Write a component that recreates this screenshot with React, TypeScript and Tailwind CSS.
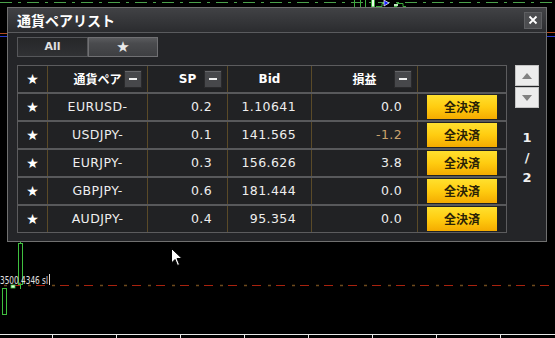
import React from "react";

const rows = [
  { pair: "EURUSD-", sp: "0.2", bid: "1.10641", pl: "0.0", neg: false },
  { pair: "USDJPY-", sp: "0.1", bid: "141.565", pl: "-1.2", neg: true },
  { pair: "EURJPY-", sp: "0.3", bid: "156.626", pl: "3.8", neg: false },
  { pair: "GBPJPY-", sp: "0.6", bid: "181.444", pl: "0.0", neg: false },
  { pair: "AUDJPY-", sp: "0.4", bid: "95.354", pl: "0.0", neg: false },
];

const latin = { fontFamily: '"DejaVu Sans", "Noto Sans CJK JP", sans-serif' };
const jp = { fontFamily: '"Noto Sans CJK JP", "DejaVu Sans", sans-serif' };

function Minus() {
  return (
    <span className="absolute right-[5px] top-1/2 -translate-y-1/2 w-[18px] h-[18px] bg-[#47484b] border border-[#2a2a2c] shadow-[inset_0_1px_0_#66676a] flex items-center justify-center">
      <span className="w-[8px] h-[2px] bg-[#f0f0f0]" />
    </span>
  );
}

function ChartBg() {
  const ticks = [52, 116, 180, 244, 308, 372, 436, 500];
  return (
    <svg className="absolute inset-0" width="555" height="338" viewBox="0 0 555 338">
      <line x1="0" y1="2.5" x2="555" y2="2.5" stroke="#4aa04a" strokeWidth="1" strokeDasharray="12 6 3 6" />
      <line x1="354.5" y1="0" x2="354.5" y2="7" stroke="#3caa3c" />
      <line x1="360.5" y1="0" x2="360.5" y2="7" stroke="#3caa3c" />
      <line x1="365.5" y1="0" x2="365.5" y2="7" stroke="#3caa3c" />
      <rect x="371.5" y="-1" width="3" height="8" fill="#e6ffe6" stroke="#3caa3c" />
      <polyline points="376,6.5 382,6.5 382,3.5 388,3.5" fill="none" stroke="#3caa3c" />
      <polyline points="394,6.5 397,6.5 397,3.5 403,3.5 403,6.5 406,6.5" fill="none" stroke="#3caa3c" />
      <rect x="394" y="4" width="4" height="2" fill="#bfe8bf" />
      <path d="M384 0 L389 3 L384 6 Z" fill="#1a22ff" stroke="#ffffff" strokeWidth="0.7" />
      <line x1="0" y1="33.5" x2="7" y2="33.5" stroke="#b04a20" />
      <line x1="0" y1="36.5" x2="7" y2="36.5" stroke="#2a3ad0" />
      <line x1="547" y1="32.5" x2="555" y2="32.5" stroke="#b04a20" />
      <line x1="547" y1="36.5" x2="555" y2="36.5" stroke="#2a3ad0" />
      <line x1="0" y1="285.5" x2="555" y2="285.5" stroke="#a8220e" strokeWidth="1.2" strokeDasharray="9 15" strokeDashoffset="12" />
      <line x1="0" y1="285.5" x2="555" y2="285.5" stroke="#6e4a1c" strokeWidth="1.6" strokeDasharray="3 21" strokeDashoffset="20" />
      <line x1="20.5" y1="242" x2="20.5" y2="289" stroke="#3fbf3f" />
      <rect x="18.5" y="243.5" width="4" height="41" fill="#000" stroke="#3fbf3f" />
      <rect x="2.5" y="288.5" width="4" height="26" fill="#000" stroke="#3fbf3f" />
      <rect x="11" y="285" width="4" height="3" fill="#d8ffd8" stroke="#3fbf3f" strokeWidth="0.8" />
      <text x="0" y="284" fontSize="10" fill="#e0e0e0" fontFamily="DejaVu Sans" textLength="48" lengthAdjust="spacingAndGlyphs">3500.4346 sl</text>
      <line x1="49.5" y1="274" x2="49.5" y2="285" stroke="#dddddd" />
      <line x1="0" y1="334.5" x2="555" y2="334.5" stroke="#e8e8e8" />
      {ticks.map((t) => (
        <line key={t} x1={t + 0.5} y1="334" x2={t + 0.5} y2="338" stroke="#e8e8e8" />
      ))}
    </svg>
  );
}

export default function App() {
  return (
    <div className="relative w-[555px] h-[338px] bg-black overflow-hidden" style={latin}>
      <ChartBg />
      <div className="absolute left-[7px] top-[7px] w-[540px] h-[235px] border border-[#707070] bg-[#242528] flex flex-col">
        <div className="h-[24px] flex items-center justify-between pl-[9px] pr-[4px] bg-[linear-gradient(#414245,#37383b_45%,#2b2c2f)]">
          <span className="text-[14px] font-bold text-white leading-none" style={jp}>通貨ペアリスト</span>
          <span className="w-[18px] h-[17px] bg-[#4c4d50] border border-[#5e5f62] flex items-center justify-center">
            <svg width="10" height="10" viewBox="0 0 10 10">
              <path d="M1.5 1.5 L8.5 8.5 M8.5 1.5 L1.5 8.5" stroke="#ffffff" strokeWidth="1.8" />
            </svg>
          </span>
        </div>
        <div className="h-[1px] bg-[#5a5b5e]" />
        <div className="flex-1 pl-[9px] pr-[7px] pt-[4px] flex flex-col">
          <div className="flex h-[20px]">
            <div className="w-[71px] h-full border border-[#56575a] bg-[linear-gradient(#262729,#303134)] flex items-center justify-center text-[11px] font-bold text-[#e0e0e0]">All</div>
            <div className="w-[70px] h-full border border-[#707073] bg-[linear-gradient(#5a5b5e,#4a4b4e_30%,#3e3f42)] flex items-center justify-center text-[15px] text-[#e8e8e8] leading-none">★</div>
          </div>
          <div className="mt-[8px] flex gap-[8px]">
            <div className="w-[490px] border border-[#5c5c5e] bg-[#212224]">
              <div className="grid grid-cols-[29px_100px_80px_84px_106px_89px] h-[26px] text-[12px] font-bold text-white">
                <div className="flex items-center justify-center text-[14px]">★</div>
                <div className="relative flex items-center justify-center border-l border-[#5a4a28]" style={jp}>
                  <span>通貨ペア</span>
                  <Minus />
                </div>
                <div className="relative flex items-center justify-center border-l border-[#5a4a28]">
                  <span>SP</span>
                  <Minus />
                </div>
                <div className="flex items-center justify-center border-l border-[#5a4a28]">Bid</div>
                <div className="relative flex items-center justify-center border-l border-[#5a4a28]" style={jp}>
                  <span>損益</span>
                  <Minus />
                </div>
                <div className="border-l border-[#5a4a28]" />
              </div>
              {rows.map((r) => (
                <div key={r.pair} className="grid grid-cols-[29px_100px_80px_84px_106px_89px] h-[28px] border-t-2 border-[#58595b] text-[12.5px] tracking-[0.4px] text-[#eeeeee]">
                  <div className="flex items-center justify-center text-[14px] text-white tracking-normal">★</div>
                  <div className="flex items-center justify-center border-l border-[#5a4a28]">{r.pair}</div>
                  <div className="flex items-center justify-end pr-[15px] border-l border-[#5a4a28]">{r.sp}</div>
                  <div className="flex items-center justify-end pr-[15px] border-l border-[#5a4a28]">{r.bid}</div>
                  <div className={`flex items-center justify-end pr-[15px] border-l border-[#5a4a28] ${r.neg ? "text-[#c9a26e]" : ""}`}>{r.pl}</div>
                  <div className="flex items-center pl-[9px] border-l border-[#5a4a28]">
                    <div className="w-[70px] h-[24px] bg-[linear-gradient(#ffe02e,#ffcc10_50%,#f4ab00)] flex items-center justify-center text-[12px] font-bold text-[#2a2206] tracking-normal" style={jp}>全決済</div>
                  </div>
                </div>
              ))}
            </div>
            <div className="w-[24px] flex flex-col">
              <div className="h-[21px] bg-[#ececec] border border-[#c4c4c4] flex items-center justify-center">
                <svg width="12" height="8" viewBox="0 0 12 8"><path d="M6 1 L11 7 L1 7 Z" fill="#818181" /></svg>
              </div>
              <div className="h-[21px] mt-[1px] bg-[#ececec] border border-[#c4c4c4] flex items-center justify-center">
                <svg width="12" height="8" viewBox="0 0 12 8"><path d="M1 1 L11 1 L6 7 Z" fill="#818181" /></svg>
              </div>
              <div className="mt-[20px] flex flex-col items-center text-[13px] font-bold leading-[20px] text-[#f0f0f0]">
                <span>1</span>
                <span>/</span>
                <span>2</span>
              </div>
            </div>
          </div>
        </div>
      </div>
      <svg className="absolute left-[171px] top-[248px]" width="13" height="19" viewBox="0 0 13 19">
        <path d="M0.5 0.5 L0.5 15 L4 11.5 L6.5 17.5 L8.5 16.5 L6 10.5 L11 10.5 Z" fill="#ffffff" stroke="#000000" strokeWidth="1" />
      </svg>
    </div>
  );
}
